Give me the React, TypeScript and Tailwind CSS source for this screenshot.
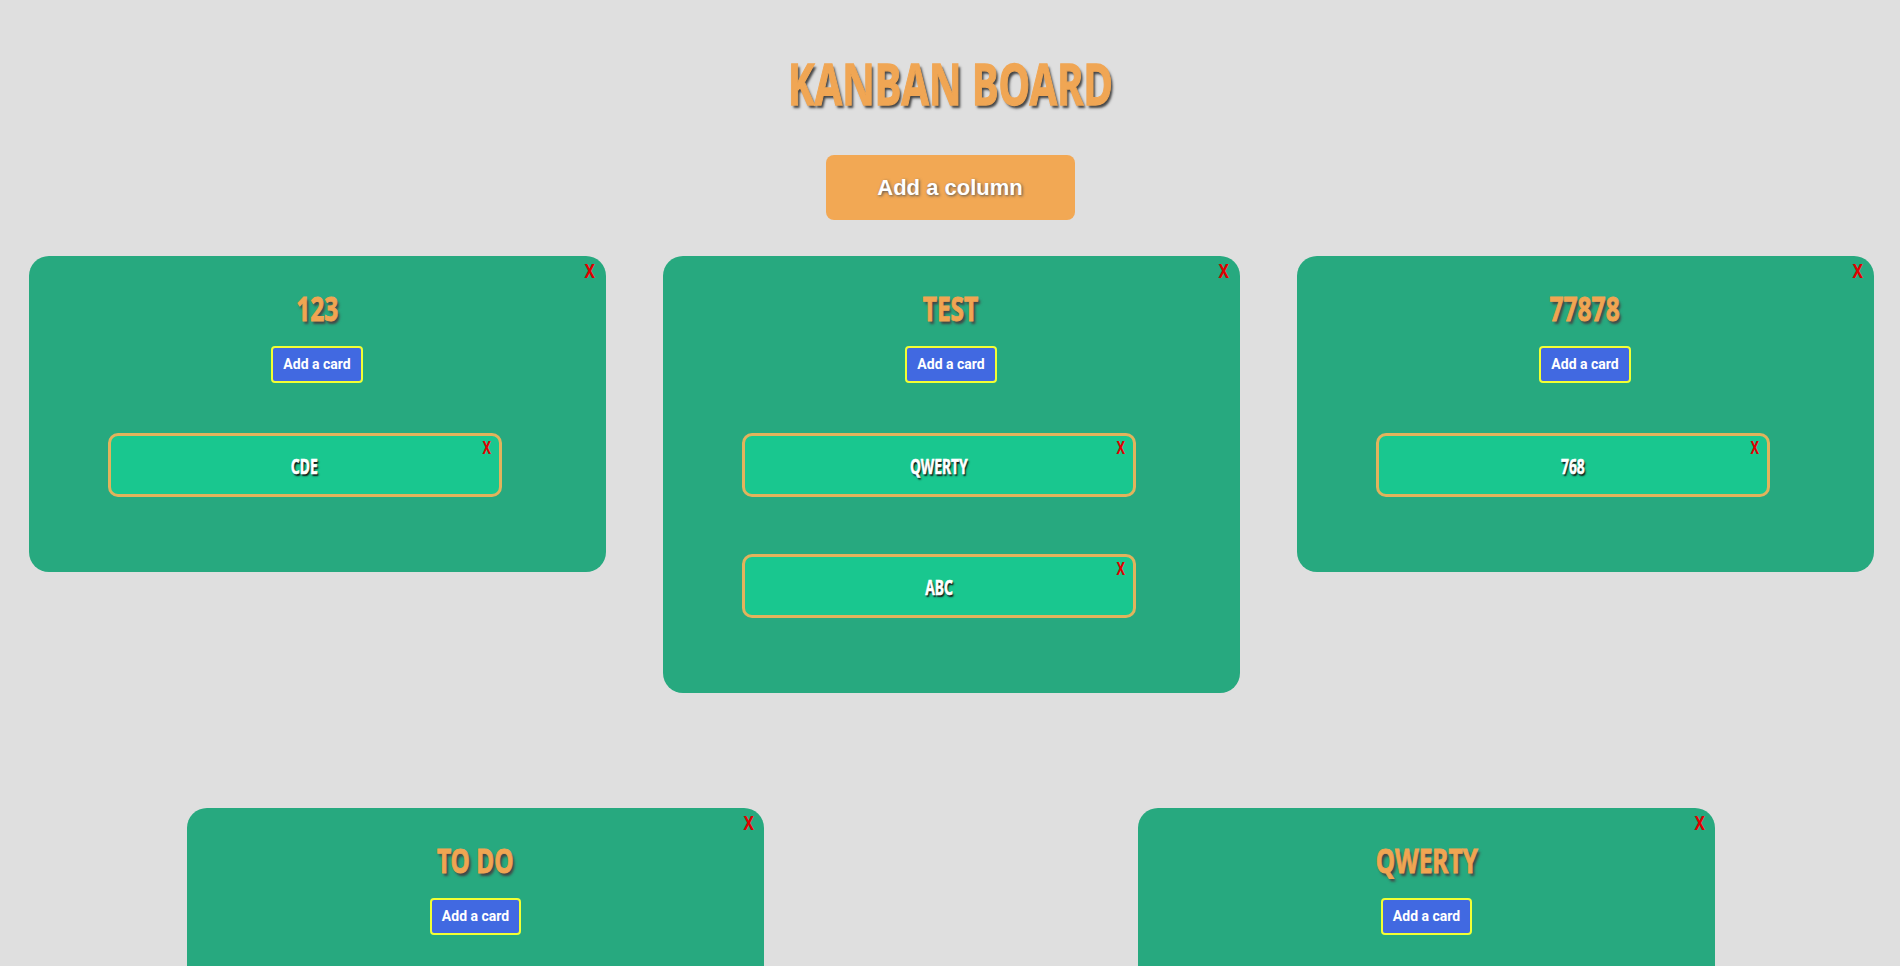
import React from "react";

type Col = { title: string; cards: string[] };

const columns: Col[] = [
  { title: "123", cards: ["CDE"] },
  { title: "TEST", cards: ["QWERTY", "ABC"] },
  { title: "77878", cards: ["768"] },
  { title: "TO DO", cards: [] },
  { title: "QWERTY", cards: [] },
];

function Card({ text }: { text: string }) {
  return (
    <div className="relative ml-[79px] flex h-[64px] w-[394px] items-center justify-center self-start rounded-[10px] border-[3px] border-[#e2b35c] bg-[#19c78f]">
      <span className="inline-block scale-x-[0.63] font-[family-name:'Noto_Sans',sans-serif] text-[22px] leading-none font-bold text-white [-webkit-text-stroke:0.6px_#fff] [text-shadow:2px_2px_2px_#111]">
        {text}
      </span>
      <span className="absolute top-[3px] right-[6px] inline-block scale-x-[0.75] font-[family-name:'Noto_Sans',sans-serif] text-[17px] leading-none font-bold text-[#e00000]">
        X
      </span>
    </div>
  );
}

function Column({ col }: { col: Col }) {
  return (
    <div className="relative flex w-[577px] flex-col items-center rounded-[20px] bg-[#27a97f] pt-[35px] pb-[75px]">
      <span className="absolute top-[5px] right-[9px] inline-block scale-x-[0.78] font-[family-name:'Noto_Sans',sans-serif] text-[20px] leading-none font-bold text-[#e00000]">
        X
      </span>
      <h2 className="inline-block scale-x-[0.72] font-[family-name:'Noto_Sans',sans-serif] text-[34px] leading-none font-bold text-[#f0a552] [-webkit-text-stroke:0.9px_#f0a552] [text-shadow:3px_3px_3px_#444]">
        {col.title}
      </h2>
      <button className="mt-[21px] flex h-[37px] items-center rounded-[4px] border-2 border-[#f2ff33] bg-[#4169e1] px-[10px] font-[family-name:Roboto,sans-serif] text-[14px] font-bold text-white">
        Add a card
      </button>
      {col.cards.length > 0 && (
        <div className="mt-[50px] flex w-full flex-col gap-[57px]">
          {col.cards.map((c) => (
            <Card key={c} text={c} />
          ))}
        </div>
      )}
    </div>
  );
}

export default function App() {
  return (
    <div className="min-h-[966px] overflow-x-hidden bg-[#dfdfdf] pt-[54px] pb-[60px]">
      <div className="flex flex-col items-center">
        <h1 className="inline-block scale-x-[0.69] font-[family-name:'Noto_Sans',sans-serif] text-[58px] leading-none font-bold text-[#f0a654] [-webkit-text-stroke:1.3px_#f0a654] [text-shadow:3px_3px_3px_#444]">
          KANBAN BOARD
        </h1>
        <button className="mt-[43px] h-[65px] w-[249px] rounded-[8px] bg-[#f2a854] font-[family-name:'Liberation_Sans',Arial,sans-serif] text-[22px] font-bold text-white [text-shadow:1px_1px_3px_#555]">
          Add a column
        </button>
      </div>
      <div className="mt-[36px] flex w-[1902px] flex-wrap items-start justify-around gap-y-[115px]">
        {columns.map((c) => (
          <Column key={c.title} col={c} />
        ))}
      </div>
    </div>
  );
}
